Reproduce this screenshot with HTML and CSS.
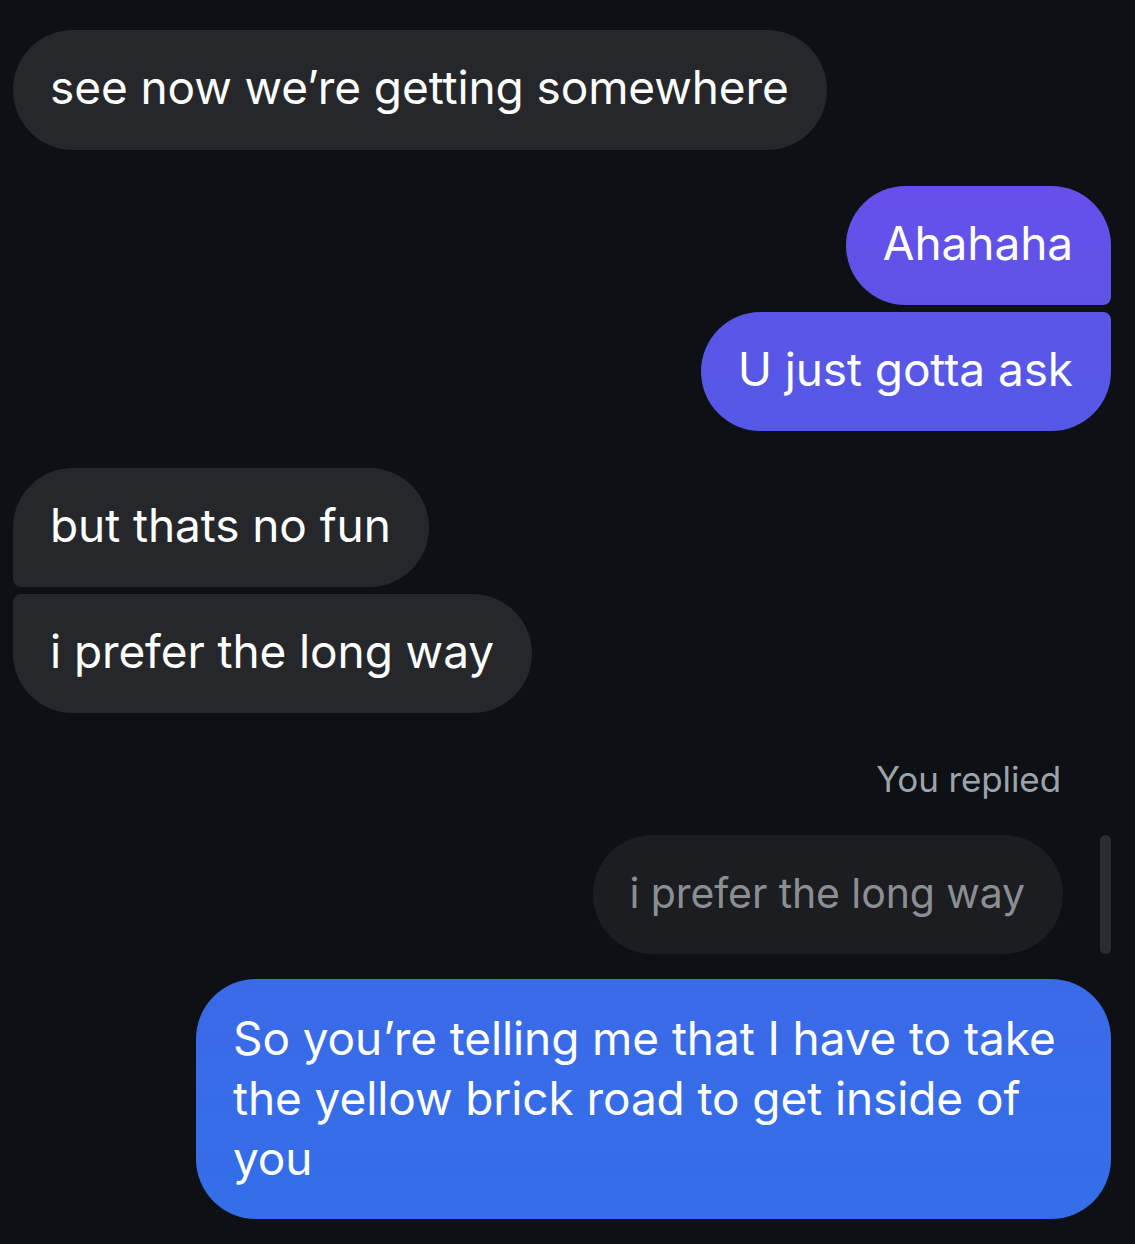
FILE: index.html
```html
<!DOCTYPE html>
<html>
<head>
<meta charset="utf-8">
<link rel="stylesheet" href="styles.css">
</head>
<body>
<div class="thread">
  <div class="row in first">
    <div class="bubble gray single">see now we’re getting somewhere</div>
  </div>
  <div class="group out">
    <div class="bubble purple1 top-out">Ahahaha</div>
    <div class="bubble purple2 bottom-out">U just gotta ask</div>
  </div>
  <div class="group in">
    <div class="bubble gray top-in">but thats no fun</div>
    <div class="bubble gray bottom-in">i prefer the long way</div>
  </div>
  <div class="reply">
    <div class="reply-label">You replied</div>
    <div class="reply-quote">
      <div class="bubble quoted single">i prefer the long way</div>
      <div class="reply-bar"></div>
    </div>
    <div class="bubble blue single multi">So you’re telling me that I have to take the yellow brick road to get inside of you</div>
  </div>
</div>
</body>
</html>
```

FILE: styles.css
```css
html, body {
  margin: 0;
  padding: 0;
  background: #0d1014;
}
body {
  font-family: Inter, "Noto Sans", "Liberation Sans", sans-serif;
  -webkit-font-smoothing: antialiased;
}
.thread {
  display: flex;
  flex-direction: column;
  padding: 30px 24px 0 13px;
  width: 1135px;
  box-sizing: border-box;
  height: 1244px;
}
.row, .group {
  display: flex;
  flex-direction: column;
  gap: 7px;
}
.in { align-items: flex-start; }
.out { align-items: flex-end; }
.group.out { margin-top: 36px; }
.group.in { margin-top: 37px; }
.bubble {
  box-sizing: border-box;
  font-size: 46px;
  line-height: 59px;
  padding: 28px 38px 32px 37px;
  color: #ffffff;
  border-radius: 60px;
  letter-spacing: -0.1px;
}
.first .bubble { padding-bottom: 33px; }
.gray { background: #25272b; }
.purple1 { background: linear-gradient(180deg, #6650ea, #5e53e7); }
.purple2 { background: linear-gradient(180deg, #5b56e8, #5558e6); }
.top-out { border-bottom-right-radius: 8px; }
.bottom-out { border-top-right-radius: 8px; }
.top-in { border-bottom-left-radius: 8px; }
.bottom-in { border-top-left-radius: 8px; }
.reply {
  display: flex;
  flex-direction: column;
  align-items: flex-end;
  margin-top: 44px;
}
.reply-label {
  font-size: 35px;
  line-height: 44px;
  color: #9ea3ab;
  margin-right: 50px;
  letter-spacing: -0.1px;
}
.reply-quote {
  display: flex;
  align-items: stretch;
  gap: 37px;
  margin-top: 34px;
}
.quoted {
  background: #1b1d21;
  color: #8b8e93;
  font-size: 41px;
  padding-top: 29px;
  padding-bottom: 31px;
}
.reply-bar {
  width: 11px;
  border-radius: 6px;
  background: #2a2c31;
}
.blue {
  margin-top: 25px;
  background: linear-gradient(180deg, #3b6ae9, #336ee8);
  width: 915px;
  padding-top: 29px;
  padding-bottom: 31px;
  line-height: 60px;
}
```
